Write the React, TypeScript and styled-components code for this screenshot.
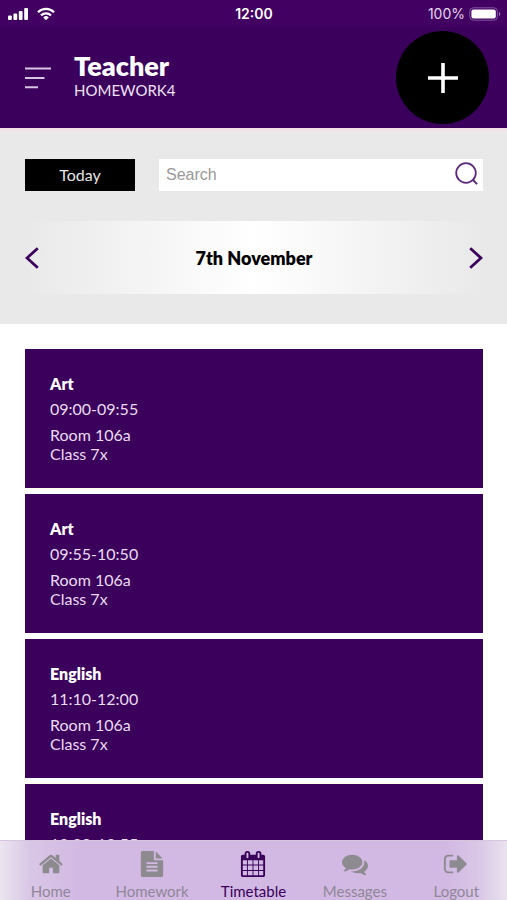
import React from "react";
import styled, { createGlobalStyle } from "styled-components";

const purple = "#3a005c";

const GlobalStyle = createGlobalStyle`
  *, *::before, *::after { box-sizing: border-box; }
  body {
    margin: 0;
    background: #fff;
    font-family: Lato, "Open Sans", sans-serif;
    font-size: 16px;
    line-height: 20px;
    color: #000;
  }
  button, input { font: inherit; border: 0; padding: 0; margin: 0; }
  button { cursor: pointer; }
  svg { display: block; }
`;

const Screen = styled.div`
  display: flex;
  flex-direction: column;
  height: 100vh;
  overflow: hidden;
`;

const Main = styled.main`
  flex: 1;
  min-height: 0;
  overflow-y: auto;
  scrollbar-width: none;
`;

const Header = styled.header`
  background: ${purple};
  color: #fff;
`;

const StatusBar = styled.div`
  display: grid;
  grid-template-columns: 1fr auto 1fr;
  align-items: center;
  height: 27px;
  padding: 0 6px 0 7px;
  background: #420062;
  font-family: Inter, sans-serif;
  font-size: 14px;
`;

const StatusGroup = styled.div<{ $end?: boolean }>`
  display: flex;
  align-items: center;
  gap: ${(p) => (p.$end ? 4 : 8)}px;
  justify-content: ${(p) => (p.$end ? "flex-end" : "flex-start")};
  color: ${(p) => (p.$end ? "#e6d6ee" : "#fff")};
`;

const Clock = styled.time`
  font-weight: 600;
`;

const TitleBar = styled.div`
  display: flex;
  align-items: center;
  height: 101px;
  padding: 0 18px 0 25px;
`;

const MenuButton = styled.button`
  display: grid;
  background: none;
  margin-right: 23px;
`;

const Titles = styled.div`
  flex: 1;
`;

const Title = styled.h1`
  margin: 0;
  font-size: 27px;
  line-height: 28px;
  font-weight: 800;
`;

const Subtitle = styled.p`
  margin: 0 0 4px;
  font-size: 15px;
  line-height: 20px;
  color: #f0e2f6;
`;

const AddButton = styled.button`
  display: grid;
  place-items: center;
  width: 93px;
  height: 93px;
  border-radius: 50%;
  background: #000;
`;

const Controls = styled.section`
  display: flex;
  flex-direction: column;
  gap: 30px;
  padding: 28px 24px 30px 25px;
  border-top: 3px solid #f3dfe8;
  background: #e9e9e9;
`;

const Filters = styled.div`
  display: flex;
  gap: 24px;
`;

const TodayButton = styled.button`
  width: 110px;
  height: 32px;
  background: #000;
  color: #e6e6e6;
`;

const SearchForm = styled.form`
  flex: 1;
  display: flex;
  align-items: center;
  height: 32px;
  padding: 0 5px 0 7px;
  background: #fff;
`;

const SearchInput = styled.input`
  flex: 1;
  min-width: 0;
  outline: none;
  background: none;
  font-family: "Liberation Sans", sans-serif;
  &::placeholder { color: #999; opacity: 1; }
`;

const IconButton = styled.button`
  display: grid;
  background: none;
`;

const DatePicker = styled.div`
  display: flex;
  align-items: center;
  justify-content: space-between;
  height: 73px;
  background: linear-gradient(90deg, #e9e9e9, #fff 50%, #e9e9e9);
`;

const DateLabel = styled.h2`
  margin: 0;
  font-size: 18px;
  line-height: 24px;
  font-weight: 800;
`;

const Lessons = styled.ul`
  display: flex;
  flex-direction: column;
  gap: 6px;
  list-style: none;
  margin: 0;
  padding: 25px 24px 25px 25px;
`;

const Lesson = styled.li`
  padding: 25px;
  background: ${purple};
  color: #eadcf1;
`;

const Subject = styled.h3`
  margin: 0;
  font-size: 16px;
  line-height: 20px;
  font-weight: 800;
  color: #fff;
`;

const LessonTime = styled.p`
  margin: 5px 0 6px;
`;

const Detail = styled.p`
  margin: 0;
  line-height: 19px;
`;

const TabBar = styled.nav`
  display: grid;
  grid-template-columns: repeat(5, 1fr);
  height: 60px;
  border-top: 1px solid #d5c5df;
  background: linear-gradient(
    90deg,
    #ebe5ef,
    #d9c6e6 30px,
    #d2b9e3 80px,
    #d2b9e3 calc(100% - 60px),
    #d9c6e6 calc(100% - 30px),
    #e9e2ee
  );
`;

const Tab = styled.a<{ $active?: boolean }>`
  display: flex;
  flex-direction: column;
  align-items: center;
  gap: 4px;
  padding-top: 10px;
  font-size: 15px;
  line-height: 20px;
  text-decoration: none;
  color: ${(p) => (p.$active ? purple : "#8f8797")};
`;

const tabs = [
  {
    name: "Home",
    d: "M1472 992v480q0 26-19 45t-45 19h-384v-384h-256v384h-384q-26 0-45-19t-19-45v-480q0-1 .5-3t.5-3l575-474 575 474q1 2 1 6zm223-69l-62 74q-8 9-21 11h-3q-13 0-21-7l-692-577-692 577q-12 8-24 7-13-2-21-11l-62-74q-8-10-7-23.5t11-21.5l719-599q32-26 76-26t76 26l244 204v-195q0-14 9-23t23-9h192q14 0 23 9t9 23v408l219 182q10 8 11 21.5t-7 23.5z",
  },
  {
    name: "Homework",
    d: "M1596 476q14 14 28 36h-472v-472q22 14 36 28zm-476 164h544v1056q0 40-28 68t-68 28h-1344q-40 0-68-28t-28-68v-1600q0-40 28-68t68-28h800v544q0 40 28 68t68 28zm160 736v-64q0-14-9-23t-23-9h-704q-14 0-23 9t-9 23v64q0 14 9 23t23 9h704q14 0 23-9t9-23zm0-256v-64q0-14-9-23t-23-9h-704q-14 0-23 9t-9 23v64q0 14 9 23t23 9h704q14 0 23-9t9-23zm0-256v-64q0-14-9-23t-23-9h-704q-14 0-23 9t-9 23v64q0 14 9 23t23 9h704q14 0 23-9t9-23z",
  },
  {
    name: "Timetable",
    active: true,
    d: "M192 1664h288v-288h-288v288zm352 0h320v-288h-320v288zm-352-352h288v-320h-288v320zm352 0h320v-320h-320v320zm-352-384h288v-288h-288v288zm736 736h320v-288h-320v288zm-384-736h320v-288h-320v288zm768 736h288v-288h-288v288zm-384-352h320v-320h-320v320zm-352-864v-288q0-13-9.5-22.5t-22.5-9.5h-64q-13 0-22.5 9.5t-9.5 22.5v288q0 13 9.5 22.5t22.5 9.5h64q13 0 22.5-9.5t9.5-22.5zm736 864h288v-320h-288v320zm-384-384h320v-288h-320v288zm384 0h288v-288h-288v288zm32-480v-288q0-13-9.5-22.5t-22.5-9.5h-64q-13 0-22.5 9.5t-9.5 22.5v288q0 13 9.5 22.5t22.5 9.5h64q13 0 22.5-9.5t9.5-22.5zm384-64v1280q0 52-38 90t-90 38h-1408q-52 0-90-38t-38-90v-1280q0-52 38-90t90-38h128v-96q0-66 47-113t113-47h64q66 0 113 47t47 113v96h384v-96q0-66 47-113t113-47h64q66 0 113 47t47 113v96h128q52 0 90 38t38 90z",
  },
  {
    name: "Messages",
    d: "M1408 768q0 139-94 257t-256.5 186.5-353.5 68.5q-86 0-176-16-124 88-278 128-36 9-86 16h-3q-11 0-20.5-8t-11.5-21q-1-3-1-6.5t.5-6.5 2-6l2.5-5 3.5-5.5 4-5 4.5-5 4-4.5q5-6 23-25t26-29.5 22.5-29 25-38.5 20.5-44q-124-72-195-177t-71-224q0-139 94-257t256.5-186.5 353.5-68.5 353.5 68.5 256.5 186.5 94 257zm384 256q0 120-71 224.5t-195 176.5q10 24 20.5 44t25 38.5 22.5 29 26 29.5 23 25q1 1 4 4.5t4.5 5 4 5 3.5 5.5l2.5 5 2 6 .5 6.5-1 6.5q-3 14-13 22t-22 7q-50-7-86-16-154-40-278-128-90 16-176 16-271 0-472-132 58 4 88 4 161 0 309-45t264-129q125-92 192-212t67-254q0-77-23-152 129 71 204 178t75 230z",
  },
  {
    name: "Logout",
    d: "M704 1440q0 4 1 20t.5 26.5-3 23.5-10 19.5-20.5 6.5h-320q-119 0-203.5-84.5t-84.5-203.5v-704q0-119 84.5-203.5t203.5-84.5h320q13 0 22.5 9.5t9.5 22.5q0 4 1 20t.5 26.5-3 23.5-10 19.5-20.5 6.5h-320q-66 0-113 47t-47 113v704q0 66 47 113t113 47h312l11.5 1 11.5 3 8 5.5 7 9 2 13.5zm928-544q0 26-19 45l-544 544q-19 19-45 19t-45-19-19-45v-288h-448q-26 0-45-19t-19-45v-384q0-26 19-45t45-19h448v-288q0-26 19-45t45-19 45 19l544 544q19 19 19 45z",
  },
];

const lessons = [
  { subject: "Art", time: "09:00-09:55" },
  { subject: "Art", time: "09:55-10:50" },
  { subject: "English", time: "11:10-12:00" },
  { subject: "English", time: "12:00-12:55" },
];

function SignalIcon() {
  return (
    <svg width="22" height="14" viewBox="0 0 22 14" fill="currentColor" aria-hidden="true">
      <rect x="1" y="8.5" width="3.8" height="4.5" rx="1" />
      <rect x="6.4" y="6.5" width="3.8" height="6.5" rx="1" />
      <rect x="11.8" y="4" width="3.8" height="9" rx="1" />
      <rect x="17.2" y="1" width="3.8" height="12" rx="1" />
    </svg>
  );
}

function WifiIcon() {
  return (
    <svg width="18" height="14" viewBox="0 0 18 14" aria-hidden="true">
      <g fill="none" stroke="currentColor" strokeWidth="2.2">
        <path d="M1 5.2a11.4 11.4 0 0 1 16 0" />
        <path d="M4 8.4a7.2 7.2 0 0 1 10 0" />
      </g>
      <path d="M9 13.2 6.2 10.4a4 4 0 0 1 5.6 0z" fill="currentColor" />
    </svg>
  );
}

function BatteryIcon() {
  return (
    <svg width="32" height="14" viewBox="0 0 32 14" aria-hidden="true">
      <rect x="0.8" y="0.8" width="27.6" height="12.4" rx="3.6" fill="none" stroke="#8058a0" />
      <rect x="2.4" y="2.4" width="24.4" height="9.2" rx="2" fill="#fff" />
      <path d="M30 5v4a2.2 2.2 0 0 0 0-4z" fill="#9c7bb0" />
    </svg>
  );
}

function Chevron({ d }: { d: string }) {
  return (
    <svg width="14" height="22" viewBox="0 0 14 22" fill="none" stroke={purple} strokeWidth="2.8" aria-hidden="true">
      <path d={d} />
    </svg>
  );
}

export default function App() {
  return (
    <Screen>
      <GlobalStyle />
      <Header>
        <StatusBar>
          <StatusGroup>
            <SignalIcon />
            <WifiIcon />
          </StatusGroup>
          <Clock>12:00</Clock>
          <StatusGroup $end>
            <span>100%</span>
            <BatteryIcon />
          </StatusGroup>
        </StatusBar>
        <TitleBar>
          <MenuButton type="button" aria-label="Menu">
            <svg width="26" height="22" viewBox="0 0 26 22" stroke="#d9c6e4" strokeWidth="2" aria-hidden="true">
              <path d="M0 1.5h26M0 11h19.5M0 20.3h13" />
            </svg>
          </MenuButton>
          <Titles>
            <Title>Teacher</Title>
            <Subtitle>HOMEWORK4</Subtitle>
          </Titles>
          <AddButton type="button" aria-label="Add homework">
            <svg width="30" height="30" viewBox="0 0 30 30" stroke="#fff" strokeWidth="3.6" aria-hidden="true">
              <path d="M0 15h30M15 0v30" />
            </svg>
          </AddButton>
        </TitleBar>
      </Header>

      <Main>
        <Controls>
          <Filters>
            <TodayButton type="button">Today</TodayButton>
            <SearchForm role="search" onSubmit={(e) => e.preventDefault()}>
              <SearchInput type="text" placeholder="Search" aria-label="Search" />
              <IconButton type="submit" aria-label="Submit search">
                <svg width="23" height="28" viewBox="0 0 23 28" fill="none" stroke="#5a2a7c" strokeWidth="1.8" aria-hidden="true">
                  <circle cx="11" cy="12" r="9.8" />
                  <path d="m17.5 18.5 4.6 4.6" strokeWidth="2" />
                </svg>
              </IconButton>
            </SearchForm>
          </Filters>
          <DatePicker>
            <IconButton type="button" aria-label="Previous day">
              <Chevron d="M12.8 1.2 2 11l10.8 9.8" />
            </IconButton>
            <DateLabel>7th November</DateLabel>
            <IconButton type="button" aria-label="Next day">
              <Chevron d="M1.2 1.2 12 11 1.2 20.8" />
            </IconButton>
          </DatePicker>
        </Controls>

        <Lessons>
          {lessons.map((l) => (
            <Lesson key={l.time}>
              <Subject>{l.subject}</Subject>
              <LessonTime>{l.time}</LessonTime>
              <Detail>Room 106a</Detail>
              <Detail>Class 7x</Detail>
            </Lesson>
          ))}
        </Lessons>
      </Main>

      <TabBar>
        {tabs.map((t) => (
          <Tab key={t.name} href={`#${t.name.toLowerCase()}`} $active={t.active} aria-current={t.active ? "page" : undefined}>
            <svg width="26" height="26" viewBox="0 0 1792 1792" fill={t.active ? purple : "#8d8a90"} aria-hidden="true">
              <path d={t.d} />
            </svg>
            {t.name}
          </Tab>
        ))}
      </TabBar>
    </Screen>
  );
}
